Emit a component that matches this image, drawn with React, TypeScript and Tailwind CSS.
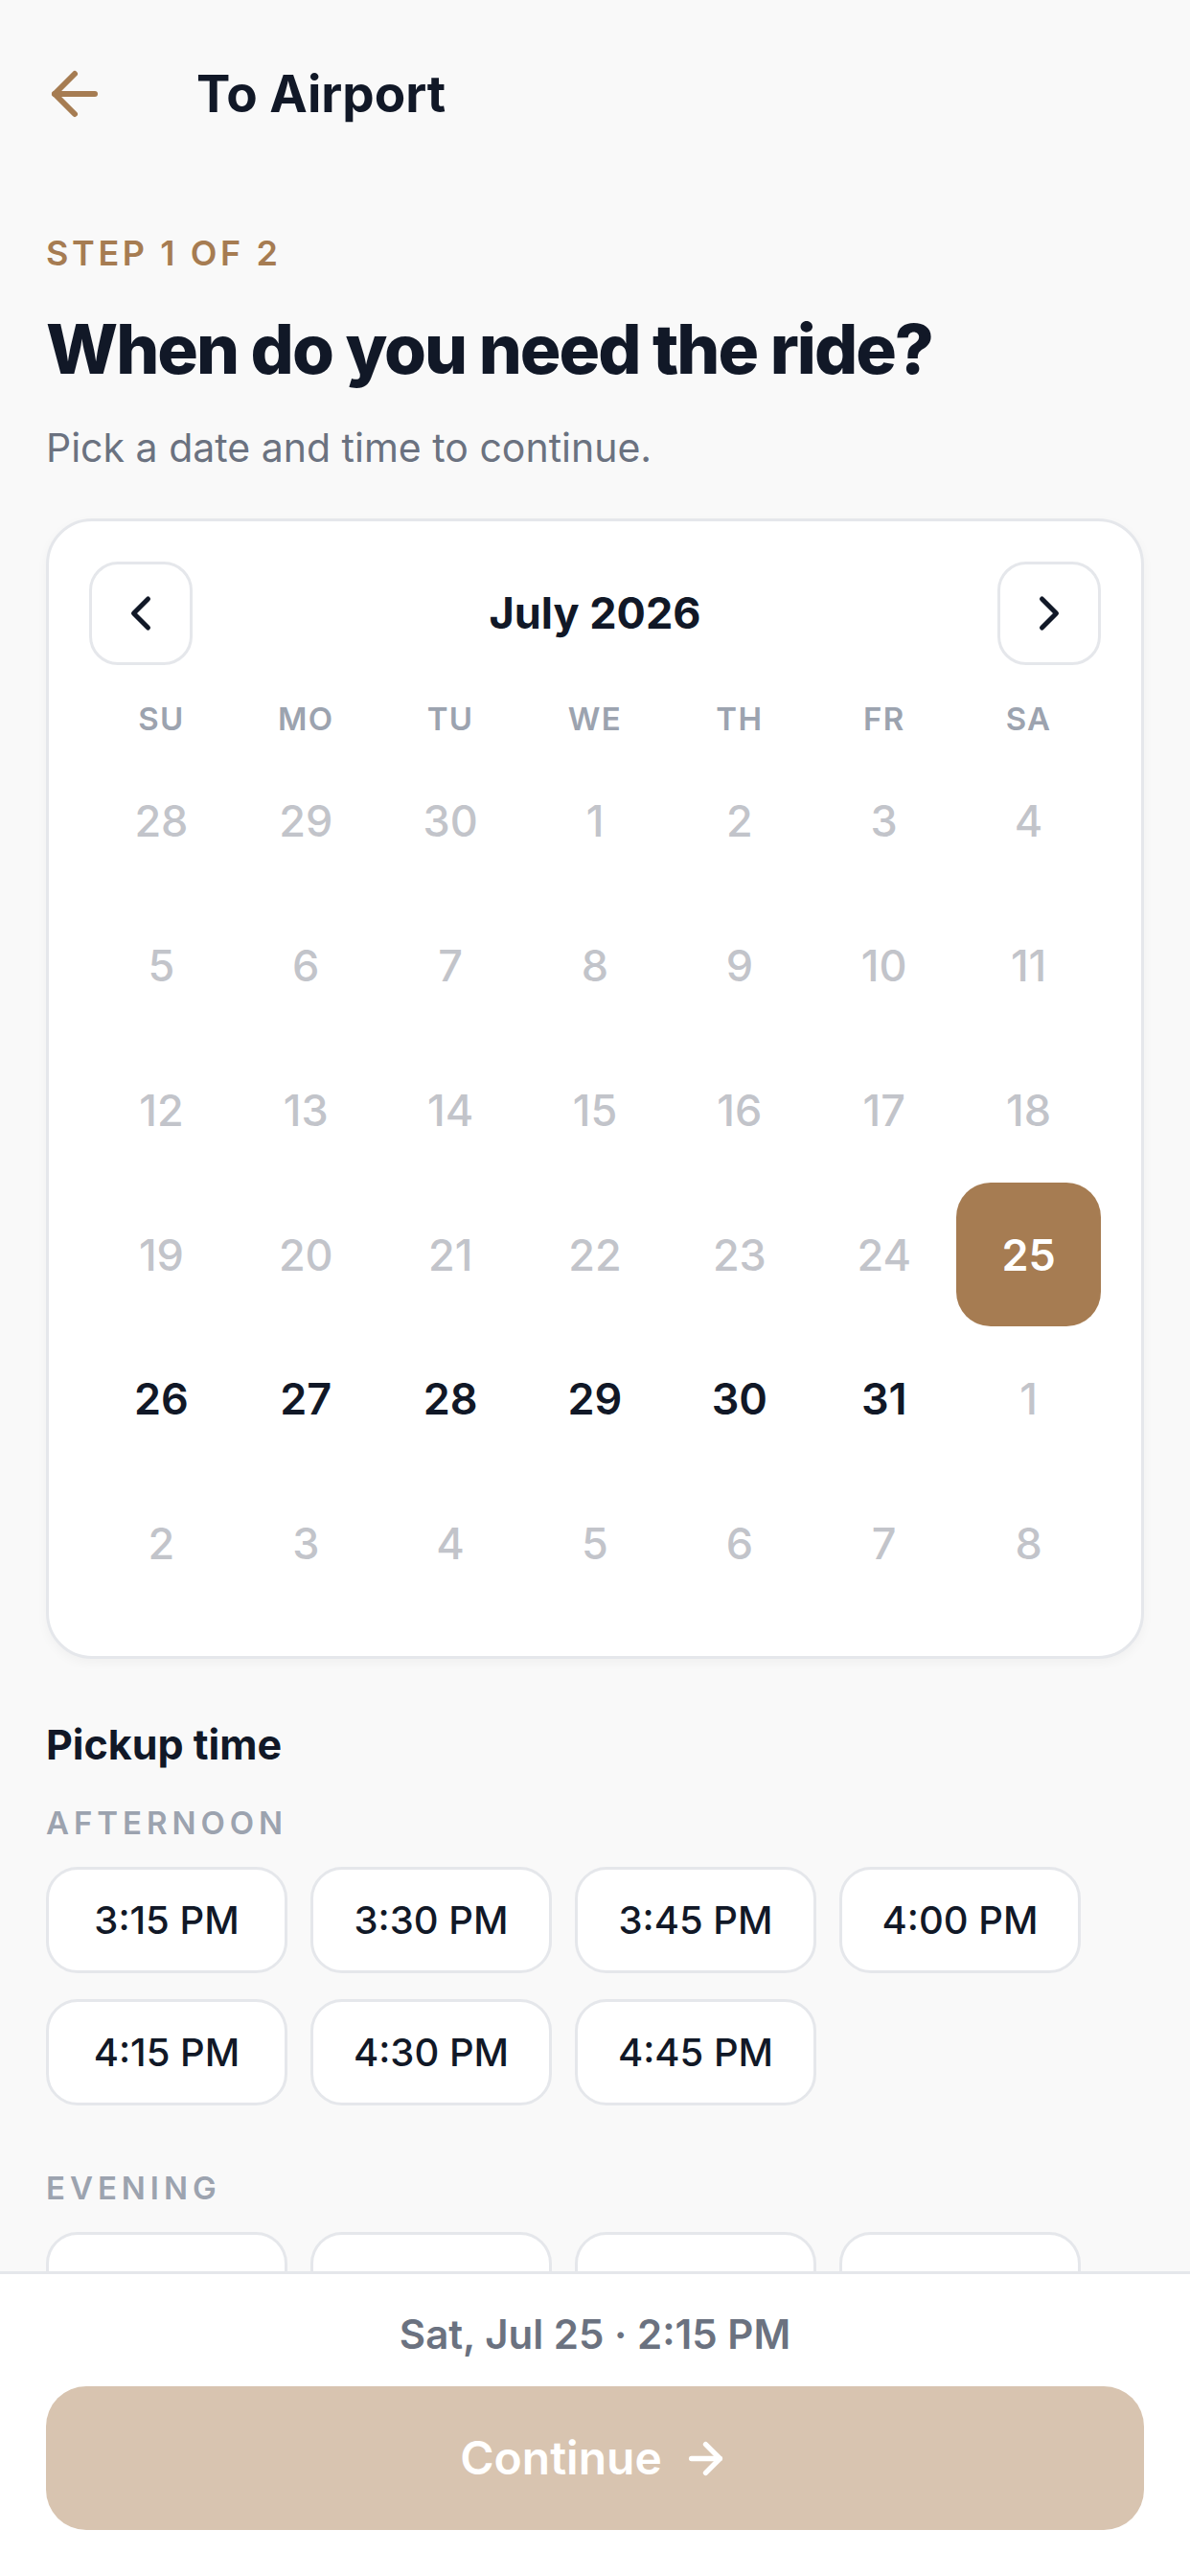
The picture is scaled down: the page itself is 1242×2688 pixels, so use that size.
import { ArrowLeft, ArrowRight, ChevronLeft, ChevronRight } from "lucide-react";

const WEEKDAYS = ["SU", "MO", "TU", "WE", "TH", "FR", "SA"];

const AFTERNOON = ["3:15 PM", "3:30 PM", "3:45 PM", "4:00 PM", "4:15 PM", "4:30 PM", "4:45 PM"];
const EVENING = ["5:00 PM", "5:15 PM", "5:30 PM", "5:45 PM", "6:00 PM", "6:15 PM"];

type DayState = "muted" | "active" | "selected";
type Day = { key: string; label: number; state: DayState };

function buildDays(): Day[] {
  const days: Day[] = [];
  [28, 29, 30].forEach((d) => days.push({ key: `jun-${d}`, label: d, state: "muted" }));
  for (let d = 1; d <= 31; d++) {
    const state: DayState = d < 25 ? "muted" : d === 25 ? "selected" : "active";
    days.push({ key: `jul-${d}`, label: d, state });
  }
  for (let d = 1; d <= 8; d++) days.push({ key: `aug-${d}`, label: d, state: "muted" });
  return days;
}

function NavButton({ children }: { children: React.ReactNode }) {
  return (
    <button className="flex h-[108px] w-[108px] items-center justify-center rounded-[30px] border-[3px] border-[#e5e7eb] bg-white text-[#111827]">
      {children}
    </button>
  );
}

function DayCell({ day }: { day: Day }) {
  if (day.state === "selected") {
    return (
      <div className="flex aspect-square items-center justify-center rounded-[36px] bg-[#a67c52] text-[45px] font-semibold leading-none text-white">
        {day.label}
      </div>
    );
  }
  return (
    <div
      className={
        day.state === "active"
          ? "flex aspect-square items-center justify-center text-[45px] font-semibold leading-none text-[#111827]"
          : "flex aspect-square items-center justify-center text-[45px] font-medium leading-none text-[#c2c4ca]"
      }
    >
      {day.label}
    </div>
  );
}

function TimeGroup({ label, times, className }: { label: string; times: string[]; className: string }) {
  return (
    <div className={className}>
      <p className="text-[33px] font-semibold leading-[44px] tracking-[0.15em] text-[#9ca3af]">{label}</p>
      <div className="mt-[24px] flex flex-wrap gap-x-[24px] gap-y-[27px]">
        {times.map((t) => (
          <button
            key={t}
            className="flex h-[111px] w-[252px] items-center justify-center rounded-[33px] border-[3px] border-[#e5e7eb] bg-white text-[40px] font-medium text-[#111827]"
          >
            {t}
          </button>
        ))}
      </div>
    </div>
  );
}

export default function App() {
  const days = buildDays();

  return (
    <div className="flex h-[2688px] flex-col overflow-hidden bg-[#f9f9f9] font-['Inter',sans-serif] text-[#111827]">
      <header className="flex h-[146px] shrink-0 items-center px-[42px] pt-[50px]">
        <button className="flex h-[72px] w-[72px] items-center justify-center text-[#a67c52]">
          <ArrowLeft size={72} strokeWidth={2} />
        </button>
        <h1 className="ml-[91px] text-[53px] font-bold leading-none">To Airport</h1>
      </header>

      <main className="min-h-0 flex-1 overflow-hidden px-[48px] pt-[94px]">
        <p className="text-[36px] font-semibold leading-[48px] tracking-[0.1em] text-[#a67c52]">STEP 1 OF 2</p>
        <h2 className="mt-[34px] text-[71px] font-extrabold leading-[84px] tracking-[-0.028em]">
          When do you need the ride?
        </h2>
        <p className="mt-[31px] text-[41px] leading-[60px] text-[#6b7280]">Pick a date and time to continue.</p>

        <section className="mt-[44px] rounded-[48px] border-[3px] border-[#e5e7eb] bg-white p-[42px] shadow-[0_4px_12px_rgba(0,0,0,0.04)]">
          <div className="flex h-[108px] items-center justify-between">
            <NavButton>
              <ChevronLeft size={60} strokeWidth={2} />
            </NavButton>
            <span className="text-[45px] font-bold">July 2026</span>
            <NavButton>
              <ChevronRight size={60} strokeWidth={2} />
            </NavButton>
          </div>

          <div className="mt-[32px] grid grid-cols-7">
            {WEEKDAYS.map((w) => (
              <span
                key={w}
                className="text-center text-[33px] font-semibold leading-[48px] tracking-[0.04em] text-[#9ca3af]"
              >
                {w}
              </span>
            ))}
          </div>

          <div className="mt-[7px] grid grid-cols-7">
            {days.map((d) => (
              <DayCell key={d.key} day={d} />
            ))}
          </div>
        </section>

        <h3 className="mt-[61px] text-[43px] font-bold leading-[56px]">Pickup time</h3>
        <TimeGroup label="AFTERNOON" times={AFTERNOON} className="mt-[32px]" />
        <TimeGroup label="EVENING" times={EVENING} className="mt-[64px]" />
      </main>

      <footer className="shrink-0 border-t-[3px] border-[#e5e7eb] bg-white px-[48px] pb-[48px] pt-[33px]">
        <p className="text-center text-[42px] font-semibold leading-[60px] text-[#6b7280]">
          Sat, Jul 25 · 2:15 PM
        </p>
        <button className="mt-[24px] flex h-[150px] w-full items-center justify-center gap-[20px] rounded-[42px] bg-[#d8c4b0] text-[48px] font-semibold text-white">
          Continue
          <ArrowRight size={51} strokeWidth={2.5} />
        </button>
      </footer>
    </div>
  );
}
